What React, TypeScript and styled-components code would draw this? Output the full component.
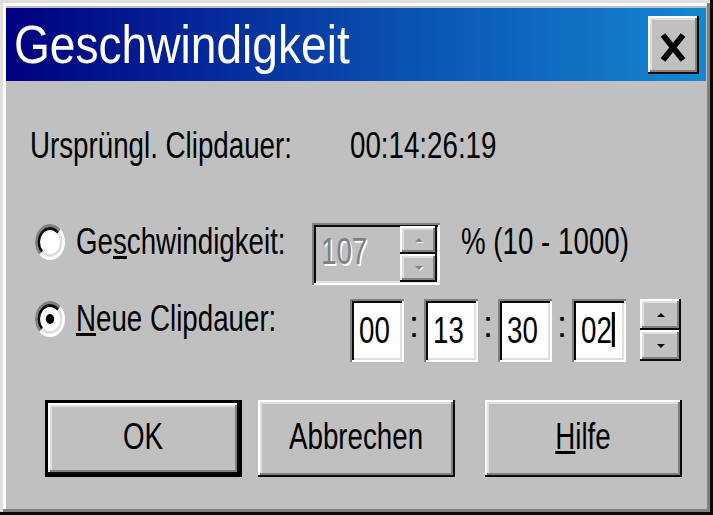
import styled, { createGlobalStyle } from "styled-components";

const GlobalStyle = createGlobalStyle`
  html, body {
    margin: 0;
    padding: 0;
    background: #c0c0c0;
  }
  body {
    font-family: "Liberation Sans", Arial, sans-serif;
  }
`;

const raised = `
  box-shadow:
    inset -2px -2px #0a0a0a,
    inset 2px 2px #ffffff,
    inset -4px -4px #808080,
    inset 4px 4px #dfdfdf;
`;

const sunken = `
  box-shadow:
    inset 2px 2px #808080,
    inset -2px -2px #ffffff,
    inset 4px 4px #0a0a0a,
    inset -4px -4px #dfdfdf;
`;

const Window = styled.div`
  width: 713px;
  height: 515px;
  box-sizing: border-box;
  padding: 8px 7px 6px 6px;
  background: #c0c0c0;
  display: flex;
  flex-direction: column;
  font-size: 36px;
  line-height: 40px;
  color: #000;
  box-shadow:
    inset -3px -3px #0a0a0a,
    inset 3px 3px #dfdfdf,
    inset -6px -6px #808080,
    inset 6px 6px #ffffff;
`;

const TitleBar = styled.div`
  flex: none;
  height: 73px;
  display: flex;
  align-items: center;
  justify-content: space-between;
  padding: 0 7px 0 8px;
  background: linear-gradient(90deg, #000080 0%, #0a4fb0 55%, #1488d2 100%);
`;

const TitleText = styled.span`
  display: inline-block;
  white-space: nowrap;
  font-size: 53px;
  line-height: 73px;
  color: #fff;
  transform: scaleX(0.87);
  transform-origin: left center;
`;

const CloseButton = styled.button`
  width: 51px;
  height: 58px;
  padding: 6px 2px 0 0;
  border: 0;
  background: #c0c0c0;
  display: flex;
  align-items: center;
  justify-content: center;
  ${raised}
`;

const Text = styled.span<{ $center?: boolean }>`
  display: inline-block;
  white-space: nowrap;
  transform: scaleX(0.77);
  transform-origin: ${p => (p.$center ? "center" : "left")} center;
`;

const Body = styled.div`
  display: flex;
  flex-direction: column;
  padding-left: 24px;
`;

const InfoRow = styled.div`
  margin-top: 45px;
  height: 40px;
  display: flex;
`;

const InfoLabel = styled.div`
  width: 320px;
  flex: none;
`;

const OptionRow = styled.div<{ $gap: number }>`
  margin-top: ${p => p.$gap}px;
  height: 64px;
  display: flex;
  align-items: flex-start;
`;

const RadioLabel = styled.label<{ $width: number }>`
  width: ${p => p.$width}px;
  flex: none;
  height: 40px;
  box-sizing: border-box;
  padding-left: 5px;
  display: flex;
  align-items: center;
  gap: 11px;
  overflow: visible;
`;

const RadioMark = styled.svg`
  flex: none;
  display: block;
`;

const LabelText = styled(Text)`
  flex: none;
  width: 200px;
`;

const SpinBox = styled.div`
  margin-top: 1px;
  width: 128px;
  height: 62px;
  flex: none;
  box-sizing: border-box;
  padding: 3px;
  display: flex;
  background: #c0c0c0;
  ${sunken}
`;

const SpinValue = styled.div`
  flex: 1;
  padding: 6px 0 0 6px;
  color: #808080;
  text-shadow: 2px 2px 0 #fff;
`;

const SpinButtons = styled.div<{ $w: number; $h: number }>`
  width: ${p => p.$w}px;
  height: ${p => p.$h}px;
  flex: none;
  display: flex;
  flex-direction: column;
`;

const SpinButton = styled.div`
  flex: 1;
  display: flex;
  align-items: center;
  justify-content: center;
  background: #c0c0c0;
  ${raised}
`;

const RangeText = styled.div`
  margin-left: 21px;
`;

const TimeFields = styled.div`
  display: flex;
  align-items: flex-start;
`;

const Field = styled.div`
  width: 54px;
  height: 63px;
  flex: none;
  box-sizing: border-box;
  padding: 12px 0 0 9px;
  background: #fff;
  ${sunken}
`;

const Colon = styled.div`
  width: 20px;
  flex: none;
  padding-top: 6px;
  text-align: center;
`;

const Caret = styled.span`
  display: inline-block;
  width: 4px;
  height: 35px;
  margin-top: 1px;
  vertical-align: top;
  background: #000;
`;

const TimeSpin = styled.div`
  margin-left: 14px;
`;

const ButtonRow = styled.div`
  margin-top: 37px;
  padding-left: 15px;
  display: flex;
`;

const Button = styled.button<{ $default?: boolean; $gap?: number }>`
  width: 197px;
  height: 77px;
  flex: none;
  box-sizing: border-box;
  margin-left: ${p => p.$gap ?? 0}px;
  padding: 0 0 4px;
  border: ${p => (p.$default ? "3px solid #000" : "0")};
  background: #c0c0c0;
  font: inherit;
  color: #000;
  display: flex;
  align-items: center;
  justify-content: center;
  ${raised}
`;

const Radio = ({ checked }: { checked?: boolean }) => (
  <RadioMark width="30" height="36" viewBox="0 0 12 12" preserveAspectRatio="none">
    <circle cx="6" cy="6" r="6" fill="#fff" />
    <path d="M1.757 10.243 A6 6 0 0 1 10.243 1.757 Z" fill="#808080" />
    <circle cx="6" cy="6" r="5" fill="#dfdfdf" />
    <path d="M2.464 9.536 A5 5 0 0 1 9.536 2.464 Z" fill="#0a0a0a" />
    <circle cx="6" cy="6" r="4" fill="#fff" />
    {checked && <circle cx="6" cy="6" r="1.7" fill="#000" />}
  </RadioMark>
);

const Arrow = ({ down, disabled }: { down?: boolean; disabled?: boolean }) => (
  <svg width="10" height="6" viewBox="0 0 10 6">
    {disabled && (
      <polygon
        points={down ? "2,2 10,2 6,6" : "2,6 10,6 6,2"}
        fill="#fff"
      />
    )}
    <polygon
      points={down ? "1,1 9,1 5,5" : "1,5 9,5 5,1"}
      fill={disabled ? "#808080" : "#000"}
    />
  </svg>
);

const CloseIcon = () => (
  <svg width="26" height="31" viewBox="0 0 26 31">
    <path d="M3 3 L23 28 M23 3 L3 28" stroke="#000" strokeWidth="6" />
  </svg>
);

const App = (): JSX.Element => {
  return (
    <>
      <GlobalStyle />
      <Window>
        <TitleBar>
          <TitleText>Geschwindigkeit</TitleText>
          <CloseButton>
            <CloseIcon />
          </CloseButton>
        </TitleBar>
        <Body>
          <InfoRow>
            <InfoLabel>
              <Text>Ursprüngl. Clipdauer:</Text>
            </InfoLabel>
            <Text>00:14:26:19</Text>
          </InfoRow>

          <OptionRow $gap={56}>
            <RadioLabel $width={282}>
              <Radio />
              <LabelText>
                Ge<u>s</u>chwindigkeit:
              </LabelText>
            </RadioLabel>
            <SpinBox>
              <SpinValue>
                <Text>107</Text>
              </SpinValue>
              <SpinButtons $w={37} $h={56}>
                <SpinButton>
                  <Arrow disabled />
                </SpinButton>
                <SpinButton>
                  <Arrow down disabled />
                </SpinButton>
              </SpinButtons>
            </SpinBox>
            <RangeText>
              <Text>% (10 - 1000)</Text>
            </RangeText>
          </OptionRow>

          <OptionRow $gap={13}>
            <RadioLabel $width={320}>
              <Radio checked />
              <LabelText>
                <u>N</u>eue Clipdauer:
              </LabelText>
            </RadioLabel>
            <TimeFields>
              <Field>
                <Text>00</Text>
              </Field>
              <Colon>:</Colon>
              <Field>
                <Text>13</Text>
              </Field>
              <Colon>:</Colon>
              <Field>
                <Text>30</Text>
              </Field>
              <Colon>:</Colon>
              <Field>
                <Text>
                  02<Caret />
                </Text>
              </Field>
              <TimeSpin>
                <SpinButtons $w={41} $h={62}>
                  <SpinButton>
                    <Arrow />
                  </SpinButton>
                  <SpinButton>
                    <Arrow down />
                  </SpinButton>
                </SpinButtons>
              </TimeSpin>
            </TimeFields>
          </OptionRow>

          <ButtonRow>
            <Button $default>
              <Text $center>OK</Text>
            </Button>
            <Button $gap={16}>
              <Text $center>Abbrechen</Text>
            </Button>
            <Button $gap={30}>
              <Text $center>
                <u>H</u>ilfe
              </Text>
            </Button>
          </ButtonRow>
        </Body>
      </Window>
    </>
  );
};

export default App;
